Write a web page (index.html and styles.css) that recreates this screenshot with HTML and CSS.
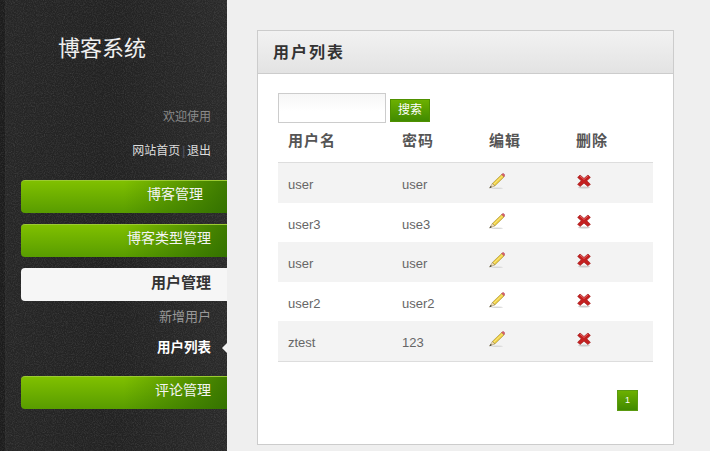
FILE: index.html
```html
<!DOCTYPE html>
<html lang="zh">
<head>
<meta charset="utf-8">
<title>博客系统</title>
<link rel="stylesheet" href="styles.css">
</head>
<body>
<svg class="defs" width="0" height="0" aria-hidden="true">
  <defs>
    <symbol id="pencil" viewBox="0 0 16 16">
      <ellipse cx="8" cy="15.2" rx="6" ry="0.7" fill="#d8d8d8"/>
      <path d="M3.4 10.4 L12.8 1.4 L15.2 3.8 L5.8 12.9 Z" fill="#f0d040" stroke="#a08a30" stroke-width="0.6"/>
      <path d="M4.6 11.5 L13.9 2.6" stroke="#fbe98a" stroke-width="1"/>
      <path d="M12.6 1.6 L13.6 0.6 Q14.2 0.2 14.8 0.7 L15.7 1.7 Q16.1 2.3 15.6 2.9 L15 3.8 Z" fill="#d9606a" stroke="#a04050" stroke-width="0.4"/>
      <path d="M3.4 10.4 L5.8 12.9 L0.6 15 Z" fill="#f2dfb4" stroke="#8a7a50" stroke-width="0.5"/>
      <path d="M1.8 13 L2.8 14 L0.4 15.2 Z" fill="#222"/>
    </symbol>
    <symbol id="cross" viewBox="0 0 16 16">
      <ellipse cx="8" cy="14.6" rx="6" ry="1" fill="#ccc"/>
      <path d="M4 2 L8 5.4 L12 2 L14.4 4.4 L10.8 7.8 L14.4 11.2 L12 13.6 L8 10.2 L4 13.6 L1.6 11.2 L5.2 7.8 L1.6 4.4 Z" fill="#c42020" stroke="#9c1a1a" stroke-width="0.6"/>
      <path d="M4 3.1 L8 6.5 L12 3.1" fill="none" stroke="#e86a6a" stroke-width="0.8"/>
    </symbol>
    <filter id="grain" x="0" y="0" width="100%" height="100%">
      <feTurbulence type="fractalNoise" baseFrequency="0.9" numOctaves="2" seed="4"/>
      <feColorMatrix type="matrix" values="0 0 0 0 1  0 0 0 0 1  0 0 0 0 1  0.5 0.5 0 0 -0.42"/>
    </filter>
  </defs>
</svg>
<div class="layout">
  <aside class="sidebar">
    <svg class="grain" aria-hidden="true"><rect width="100%" height="100%" filter="url(#grain)"/></svg>
    <div class="side-inner">
      <h1 class="logo">博客系统</h1>
      <p class="welcome">欢迎使用</p>
      <p class="links"><a>网站首页</a> <span class="sep">|</span> <a>退出</a></p>
      <nav class="nav">
        <a class="nav-item">博客管理</a>
        <a class="nav-item">博客类型管理</a>
        <a class="nav-item active">用户管理</a>
        <div class="subnav">
          <a class="sub-item">新增用户</a>
          <a class="sub-item current">用户列表</a>
        </div>
        <a class="nav-item">评论管理</a>
      </nav>
    </div>
  </aside>
  <main class="main">
    <section class="panel">
      <h2 class="panel-title">用户列表</h2>
      <div class="panel-body">
        <form class="search">
          <input class="search-input" type="text">
          <button class="btn" type="button">搜索</button>
        </form>
        <table class="users">
          <thead>
            <tr><th class="c1">用户名</th><th class="c2">密码</th><th class="c3">编辑</th><th>删除</th></tr>
          </thead>
          <tbody>
            <tr><td>user</td><td>user</td><td><svg class="icon"><use href="#pencil"/></svg></td><td><svg class="icon"><use href="#cross"/></svg></td></tr>
            <tr><td>user3</td><td>use3</td><td><svg class="icon"><use href="#pencil"/></svg></td><td><svg class="icon"><use href="#cross"/></svg></td></tr>
            <tr><td>user</td><td>user</td><td><svg class="icon"><use href="#pencil"/></svg></td><td><svg class="icon"><use href="#cross"/></svg></td></tr>
            <tr><td>user2</td><td>user2</td><td><svg class="icon"><use href="#pencil"/></svg></td><td><svg class="icon"><use href="#cross"/></svg></td></tr>
            <tr><td>ztest</td><td>123</td><td><svg class="icon"><use href="#pencil"/></svg></td><td><svg class="icon"><use href="#cross"/></svg></td></tr>
          </tbody>
        </table>
        <div class="pager"><a class="page">1</a></div>
      </div>
    </section>
  </main>
</div>
</body>
</html>
```

FILE: styles.css
```css
* { box-sizing: border-box; }
html, body { margin: 0; height: 100%; overflow: hidden; }
body {
  background: #efefef;
  font-family: "Liberation Sans", "Noto Sans CJK SC", sans-serif;
  font-size: 13px;
  color: #666;
}
.defs { display: block; height: 0; }
.layout { display: flex; height: 451px; }

.sidebar {
  position: relative;
  width: 227px;
  flex: none;
  background:
    linear-gradient(90deg, #1c1c1c 0, #1c1c1c 5px, #2e2e2e 5px, #262626 6px, #222 50%, #2a2a2a 100%);
  overflow: hidden;
}
.grain { position: absolute; inset: 0; width: 100%; height: 100%; opacity: 0.3; }
.side-inner { position: relative; padding: 35px 0 0 21px; }
.logo {
  margin: 0 0 0 37px;
  font-size: 22px;
  line-height: 28px;
  font-weight: 400;
  color: #efefef;
}
.welcome {
  margin: 44px 16px 0 0;
  text-align: right;
  font-size: 12px;
  line-height: 20px;
  color: #8a8a8a;
}
.links {
  margin: 14px 16px 0 0;
  text-align: right;
  font-size: 12px;
  line-height: 20px;
  color: #ddd;
  word-spacing: -1.5px;
}
.sep { color: #556; }
.nav { display: flex; flex-direction: column; margin-top: 19px; }
.nav-item {
  display: block;
  height: 33px;
  margin-bottom: 11px;
  padding-right: 16px;
  border-radius: 4px 0 0 4px;
  border-top: 1px solid #9ccb32;
  background:
    linear-gradient(90deg, rgba(40, 100, 0, 0) 50%, rgba(40, 100, 0, 0.75) 100%),
    linear-gradient(#80c000, #589c00);
  color: #f4f4f4;
  font-size: 14px;
  line-height: 27px;
  text-align: right;
}
.nav-item:first-child { padding-right: 24px; }
.nav-item.active {
  border-top: 0;
  background: #f6f6f6;
  color: #333;
  font-size: 15px;
  font-weight: 700;
  line-height: 29px;
  margin-bottom: 0;
}
.subnav { display: flex; flex-direction: column; padding: 1px 0 12px; }
.sub-item {
  position: relative;
  height: 31px;
  padding-right: 16px;
  font-size: 13px;
  line-height: 30px;
  text-align: right;
  color: #999;
}
.sub-item.current { color: #fff; font-size: 13.5px; font-weight: 700; }
.sub-item.current::after {
  content: "";
  position: absolute;
  right: 0;
  top: 10px;
  border: 5px solid transparent;
  border-right-color: #f2f2f2;
}

.main { flex: 1; padding: 30px 36px 0 30px; }
.panel {
  width: 417px;
  height: 415px;
  background: #fff;
  border: 1px solid #ccc;
}
.panel-title {
  margin: 0;
  height: 43px;
  padding-left: 15px;
  background: linear-gradient(#f2f2f2, #e3e3e3);
  border-bottom: 1px solid #ccc;
  font-size: 16px;
  font-weight: 700;
  line-height: 44px;
  letter-spacing: 2px;
  color: #333;
}
.panel-body { padding: 19px 20px 0; }
.search { display: flex; align-items: center; gap: 4px; height: 30px; }
.search-input {
  width: 108px;
  height: 30px;
  margin: 0;
  padding: 0;
  background: linear-gradient(#f6f6f6, #fff 60%);
  border: 1px solid #ccc;
}
.btn {
  width: 40px;
  height: 23px;
  margin: 4px 0 0;
  padding: 0;
  border: 1px solid #4f9000;
  background: linear-gradient(#6cb000, #418a00);
  color: #fff;
  font: 12px/20px "Liberation Sans", "Noto Sans CJK SC", sans-serif;
}
.users { width: 375px; border-collapse: separate; border-spacing: 0; table-layout: fixed; }
.users th {
  height: 40px;
  padding: 0 10px 6px;
  border-bottom: 1px solid #ddd;
  font-size: 15px;
  font-weight: 700;
  letter-spacing: 1px;
  text-align: left;
  color: #555;
}
.users .c1 { width: 114px; }
.users .c2, .users .c3 { width: 87px; }
.users td {
  padding: 14px 10px 0;
  color: #666;
  line-height: 16px;
  vertical-align: top;
}
.users tbody tr:nth-child(odd) td { height: 40px; background: #f3f3f3; }
.users tbody tr:nth-child(even) td { height: 39px; }
.users tbody tr:last-child td { height: 41px; border-bottom: 1px solid #ddd; }
.icon { display: block; width: 16px; height: 16px; margin-top: -4px; }
.pager { display: flex; justify-content: flex-end; padding: 28px 15px 0 0; }
.page {
  display: block;
  width: 21px;
  height: 21px;
  background: linear-gradient(#6cb000, #418a00);
  border: 1px solid #5a9a10;
  color: #fff;
  font-size: 9px;
  line-height: 19px;
  text-align: center;
}
```
